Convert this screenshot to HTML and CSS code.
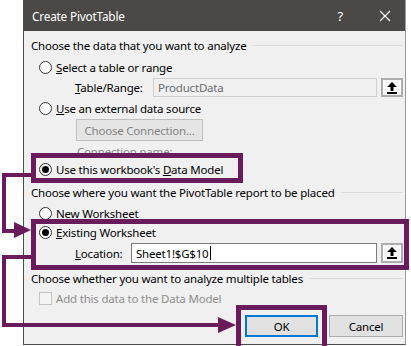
FILE: index.html
```html
<!DOCTYPE html>
<html>
<head>
<meta charset="utf-8">
<link rel="stylesheet" href="styles.css">
</head>
<body>
<div class="page">
  <div class="dialog">
    <div class="titlebar">
      <span class="title">Create PivotTable</span>
      <span class="help">?</span>
      <svg class="close" width="12" height="12" viewBox="0 0 12 12"><path d="M1 1 L11 11 M11 1 L1 11" stroke="#fff" stroke-width="1.2" fill="none"/></svg>
    </div>
    <div class="content">
      <div class="header h1"><span>Choose the data that you want to analyze</span><i class="rule"></i></div>
      <div class="opt r1"><span class="radio"></span><span><u>S</u>elect a table or range</span></div>
      <div class="field f1"><span class="label l1"><u>T</u>able/Range:</span><span class="input disabled">ProductData</span><span class="pick"><svg width="10" height="12" viewBox="0 0 10 12"><path d="M5 0 L10 5 L6.5 5 L6.5 9 L3.5 9 L3.5 5 L0 5 Z" fill="#000"/><rect x="0" y="10" width="10" height="2" fill="#000"/></svg></span></div>
      <div class="opt r2"><span class="radio"></span><span><u>U</u>se an external data source</span></div>
      <div class="btnrow"><span class="btn dis">Choose Connection...</span></div>
      <div class="conn">Connection name:</div>
      <div class="opt r3"><span class="radio on"></span><span>Use this workbook's <u>D</u>ata Model</span></div>
      <div class="header h2"><span>Choose where you want the PivotTable report to be placed</span><i class="rule"></i></div>
      <div class="opt r4"><span class="radio"></span><span>New Worksheet</span></div>
      <div class="opt r5"><span class="radio on"></span><span><u>E</u>xisting Worksheet</span></div>
      <div class="field f2"><span class="label l2"><u>L</u>ocation:</span><span class="input active">Sheet1!$G$10<i class="caret"></i></span><span class="pick"><svg width="10" height="12" viewBox="0 0 10 12"><path d="M5 0 L10 5 L6.5 5 L6.5 9 L3.5 9 L3.5 5 L0 5 Z" fill="#000"/><rect x="0" y="10" width="10" height="2" fill="#000"/></svg></span></div>
      <div class="header h3"><span>Choose whether you want to analyze multiple tables</span><i class="rule"></i></div>
      <div class="opt chk"><span class="check"></span><span>Add this data to the Data Model</span></div>
      <div class="actions"><span class="btn ok">OK</span><span class="btn cancel">Cancel</span></div>
    </div>
  </div>
  <div class="hl hl1"></div>
  <div class="hl hl2"></div>
  <div class="hl hl3"></div>
  <svg class="arrows" width="411" height="346" viewBox="0 0 411 346">
    <polyline points="31,175 4,175 4,231 18,231" fill="none" stroke="#6a1b5b" stroke-width="4"/>
    <polygon points="14,222 31,230 14,238" fill="#6a1b5b"/>
    <polyline points="31,257 4,257 4,325 222,325" fill="none" stroke="#6a1b5b" stroke-width="4"/>
    <polygon points="218,317 236,325 218,333" fill="#6a1b5b"/>
  </svg>
</div>
</body>
</html>
```
FILE: styles.css
```css
* { box-sizing: border-box; }
html, body { margin: 0; padding: 0; background: #fff; }
body { font-family: "Noto Sans", "Open Sans", sans-serif; font-size: 11.5px; letter-spacing: -0.2px; color: #000; }
.page { position: relative; width: 411px; height: 346px; overflow: hidden; }
.dialog {
  margin-left: 23px;
  width: 383px;
  height: 345px;
  background: #f0f0f0;
  border-left: 1px solid #4a4a4a;
  border-bottom: 1px solid #4a4a4a;
  border-right: 1px solid #9a9a9a;
}
.titlebar {
  height: 31px;
  background: #4a4947;
  color: #fff;
  display: flex;
  align-items: center;
  padding-left: 8px;
  font-size: 11.8px;
}
.title { flex: 1; }
.help { margin-right: 36px; font-size: 13px; }
.close { margin-right: 14px; }
.content { padding: 6px 2px 0 7px; }
.header { display: flex; align-items: center; height: 16px; }
.header span { white-space: nowrap; }
.rule { flex: 1; height: 1px; background: #dcdcdc; margin-left: 6px; margin-top: 1px; }
.opt { display: flex; align-items: center; height: 16px; padding-left: 8px; white-space: nowrap; }
.radio {
  width: 13px; height: 13px; border-radius: 50%;
  border: 1px solid #333; background: #fff;
  margin-right: 4px; position: relative; flex: none;
}
.radio.on::after {
  content: ""; position: absolute; left: 2px; top: 2px;
  width: 7px; height: 7px; border-radius: 50%; background: #000;
}
.check { width: 13px; height: 13px; border: 1px solid #c4c4c4; background: #f4f4f4; margin-right: 4px; flex: none; }
.chk { color: #8d8d8d; }
.r1 { margin-top: 5px; height: 18px; }
.f1 { margin-top: 2px; }
.r2 { margin-top: 2px; height: 18px; }
.btnrow { margin-top: 2px; padding-left: 45px; height: 22px; display: flex; }
.conn { margin-top: 3px; height: 16px; padding-left: 46px; color: #8a8a8a; line-height: 16px; overflow: hidden; }
.r3 { margin-top: 1px; }
.h2 { margin-top: 7px; }
.r4 { margin-top: 5px; }
.r5 { margin-top: 3px; }
.f2 { margin-top: 3px; }
.h3 { margin-top: 7px; }
.chk { margin-top: 4px; }
.field { display: flex; align-items: center; height: 19px; padding-left: 44px; }
.f2 { height: 20px; }
.label { white-space: nowrap; }
.l1 { width: 78px; }
.l2 { width: 56px; }
.input {
  height: 100%; flex: 1; display: flex; align-items: center; padding-left: 4px;
  border: 1px solid #c8c8c8;
}
.input.disabled { background: #f0f0f0; color: #6d6d6d; border-color: #d0d0d0; }
.input.active { background: #fff; border-color: #7a7a7a; color: #000; }
.caret { display: inline-block; width: 1px; height: 14px; background: #000; margin-left: 1px; }
.pick {
  width: 22px; height: 100%; margin-left: 4px; flex: none;
  border: 2px solid #adadad; background: #fff;
  display: flex; align-items: center; justify-content: center;
}
.btn {
  display: flex; align-items: center; justify-content: center;
  height: 22px; background: #e1e1e1; border: 1px solid #adadad;
}
.btn.dis { width: 127px; color: #838383; border-color: #bfbfbf; background: #e5e5e5; }
.actions { margin-top: 9px; display: flex; justify-content: flex-end; gap: 11px; }
.ok { width: 73px; border: 2px solid #0078d7; }
.cancel { width: 74px; }
.hl { position: absolute; border: 5px solid #6a1b5b; }
.hl1 { left: 31px; top: 153px; width: 212px; height: 30px; }
.hl2 { left: 31px; top: 219px; width: 378px; height: 51px; }
.hl3 { left: 236px; top: 305px; width: 91px; height: 46px; }
.arrows { position: absolute; left: 0; top: 0; }
```
